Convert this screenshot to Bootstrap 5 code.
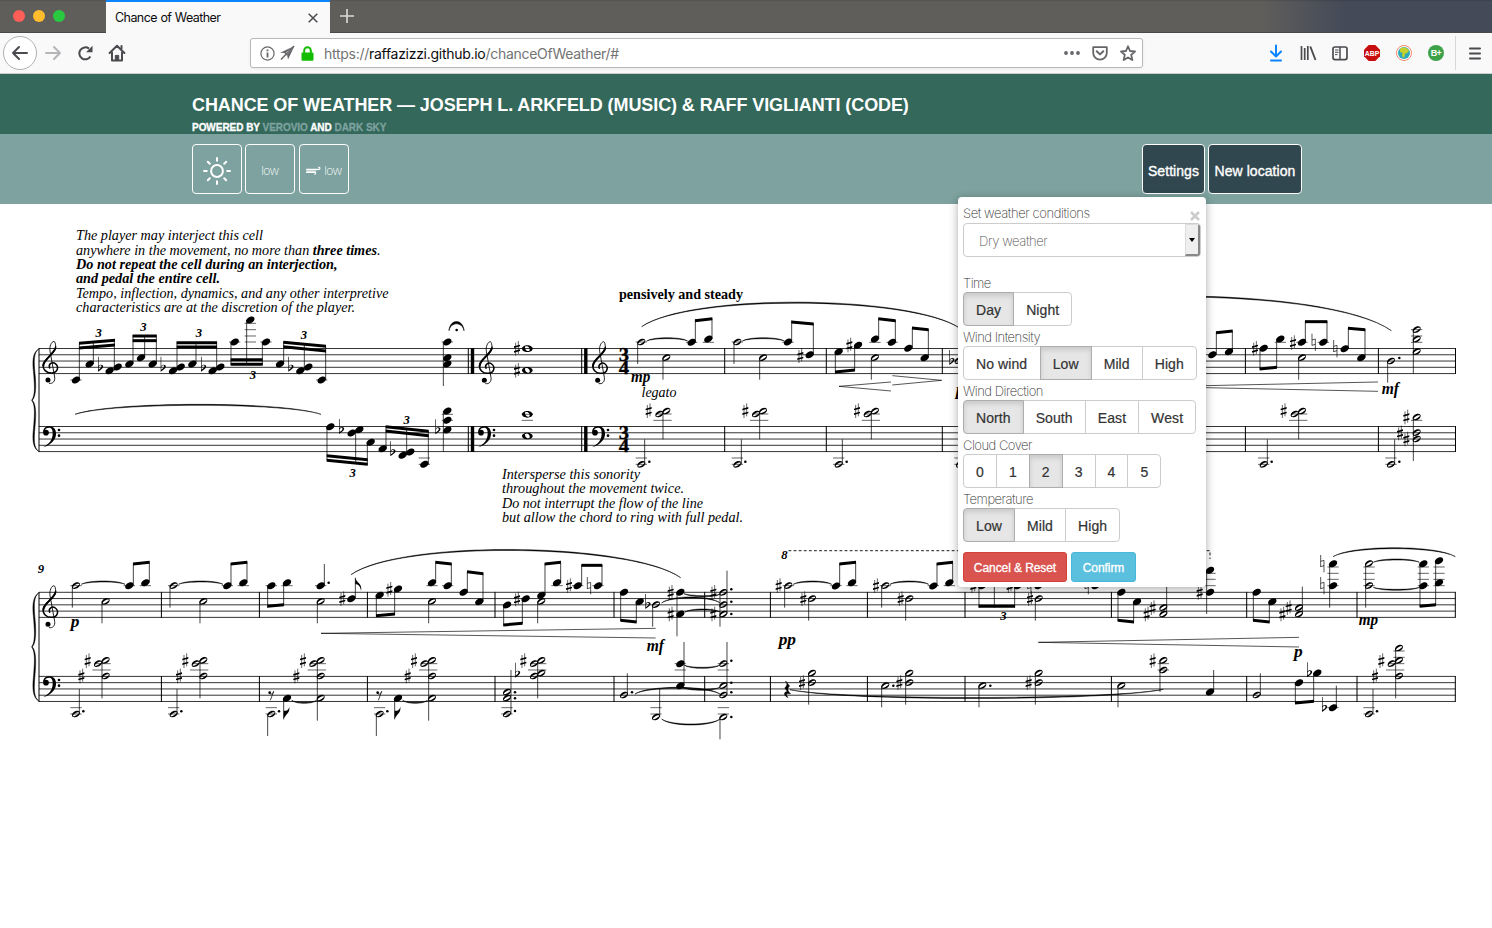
<!DOCTYPE html>
<html lang="en">
<head>
<meta charset="utf-8">
<title>Chance of Weather</title>
<meta name="viewport" content="width=device-width, initial-scale=1">
<link rel="stylesheet" href="https://cdn.jsdelivr.net/npm/bootstrap@5.3.0/dist/css/bootstrap.min.css">
<style>
body{font-family:"Liberation Sans",Arial,sans-serif;font-size:14px;line-height:20px;color:#333;background:#fff;overflow:hidden}
svg{display:block;flex:none}
.tabstrip{height:33px;background:linear-gradient(#0002,#0000 2px),linear-gradient(90deg,#605e5b 0,#605e5b 1260px,#444a58 1345px);border-bottom:1px solid #4a4948}
.lights{width:106px;padding-left:13px;gap:8px}
.lights i{width:12px;height:12px;border-radius:50%;background:#ff5f57}
.lights i:nth-child(2){background:#ffbd2e}
.lights i:nth-child(3){background:#28c940}
.page-tab{width:224px;height:33px;background:#f9f9fa;border-top:2px solid #0a84ff;font:12px/30px Inter,sans-serif;letter-spacing:-.55px;word-spacing:.5px;color:#0c0c0d;padding:0 12px 0 9px}
.page-tab span{letter-spacing:-.52px}
.toolbar{height:41px;background:#f9f9fa;border-bottom:1px solid #ccc;color:#4a4a4f}
.back{width:34px;height:34px;border:1px solid #b1b1b1;border-radius:50%;background:#fff;margin-left:3px}
.urlbar{width:893px;height:30px;border:1px solid #b9b9ba;border-radius:3px;background:#fff;padding:0 6px 0 9px;font:14px Inter,sans-serif;box-shadow:0 1px 3px #0001}
.url{color:#737373;letter-spacing:-.28px;margin-left:10px;padding-top:1px}
.url b{font-weight:400;color:#0c0c0d}
.masthead{height:60px;background:#33685b;padding-left:192px;color:#fff}
.masthead h1{font-size:18px;line-height:20px;font-weight:700;letter-spacing:-.09px;margin:0;padding-top:21px;white-space:nowrap}
.masthead p{font-size:10px;line-height:12px;font-weight:700;letter-spacing:-.04px;margin:7px 0 0;-webkit-text-stroke:.3px;white-space:nowrap}
.masthead a{color:#7da29f;text-decoration:none}
.condbar{height:70px;background:#7da29f;padding:10px 190px 0 192px}
.tile{width:50px;height:50px;border:1px solid #fff;border-radius:4px;color:#fff;font:200 12px Inter,sans-serif;letter-spacing:-.6px;padding:3px 0 0}
.btn-dusk{height:50px;border:1px solid #fff;border-radius:4px;background:#31474f;color:#fff;font-size:14px;letter-spacing:.06px;padding:4px 0 0;-webkit-text-stroke:.35px}
.settings-pop{position:absolute;right:96px;top:53px;width:248px;height:390px;z-index:5;background:#fff;border:0;border-radius:4px;box-shadow:0 2px 10px #0005;padding:6px 5px 5px}
.thin{font-family:Inter,sans-serif;font-weight:200;font-size:13px;line-height:20px;letter-spacing:-.4px;color:#333}
.settings-pop>.thin:not(.pick){height:20px;line-height:22px;letter-spacing:-.5px}
.pick{height:34px;width:238px;border:1px solid #ccc;border-radius:4px;padding-left:15px;margin-bottom:15px;overflow:hidden;color:#555}
.pick>span:first-child{padding-top:1px}
.arrow{width:15px;height:32px;background:#efefef;border:1px solid #ddd;border-right:2px solid #888;border-bottom:2px solid #888}
.settings-pop .btn-group .btn{height:34px;font-size:14px;line-height:20px;letter-spacing:.09px;padding:7px 12px 5px;border:1px solid #ccc;color:#333;background:#fff;border-radius:4px;-webkit-text-stroke:.2px}
.settings-pop .btn-group .btn+.btn{border-top-left-radius:0;border-bottom-left-radius:0}
.settings-pop .btn-group .btn:not(:last-child){border-top-right-radius:0;border-bottom-right-radius:0}
.settings-pop .btn-group .btn.active{background:#e6e6e6;border-color:#adadad;box-shadow:inset 0 3px 5px #00000020}
.act{height:30px;font-size:12px;line-height:18px;letter-spacing:-.08px;padding:6px 0 4px;border-radius:3px;color:#fff;-webkit-text-stroke:.3px}
.act:hover{color:#fff}
.act-red{background:#d9534f;border:1px solid #d43f3a;width:104px}
.act-blue{background:#5bc0de;border:1px solid #46b8da;width:65px}
.score text{font-family:"Liberation Serif",serif;fill:#000}
.score .it{font-style:italic;font-size:14px}
.score .bi{font-style:italic;font-weight:700}
</style>
</head>
<body>
<header>
  <div class="tabstrip d-flex">
    <div class="lights d-flex align-items-center"><i></i><i></i><i></i></div>
    <div class="page-tab d-flex justify-content-between align-items-center">
      <span style="letter-spacing:-.57px;font-size:12.500px">Chance of Weather</span>
      <svg width="10" height="10" viewBox="0 0 10 10" stroke="#4a4a4f" stroke-width="1.5"><path d="M.7.7l8.6 8.6M9.3.7L.7 9.3"/></svg>
    </div>
    <svg class="ms-2 mt-2" width="18" height="16" viewBox="0 0 18 16" stroke="#ddd" stroke-width="1.6"><path d="M2 8h14M9 1v14"/></svg>
  </div>
  <div class="toolbar d-flex align-items-center">
    <span class="back d-flex align-items-center justify-content-center">
      <svg width="18" height="16" viewBox="0 0 18 16" fill="none" stroke="#4a4a4f" stroke-width="2" stroke-linecap="round" stroke-linejoin="round"><path d="M16 8H2M8 2L2 8l6 6"/></svg>
    </span>
    <svg style="margin-left:8px" width="17" height="16" viewBox="0 0 17 16" fill="none" stroke="#b5b5b7" stroke-width="2" stroke-linecap="round" stroke-linejoin="round"><path d="M1 8h14M9 2l6 6-6 6"/></svg>
    <svg style="margin-left:15px" width="17" height="16" viewBox="0 0 17 16" fill="none" stroke="#4a4a4f" stroke-width="2"><path d="M13.4 11.5A6 6 0 1 1 12 3.6"/><path d="M15.5.8v6.4H9.1z" fill="#4a4a4f" stroke="none"/></svg>
    <svg style="margin-left:14px" width="18" height="18" viewBox="0 0 18 18" fill="none" stroke="#4a4a4f" stroke-width="2" stroke-linejoin="round" stroke-linecap="round"><path d="M1.6 9L9 1.7 16.4 9M4 8.5v8h10v-8"/><path d="M7.3 16v-4.600h3.400V16" fill="#4a4a4f" stroke-width="1"/><path d="M13.500 2v2.500"/></svg>
    <div class="urlbar d-flex align-items-center" style="margin-left:124px">
      <svg width="15" height="15" viewBox="0 0 15 15" fill="none" stroke="#66666a" stroke-width="1.2"><circle cx="7.5" cy="7.5" r="6.6"/><path d="M7.5 6.4v5M7.5 3.5v1.7" stroke-width="1.8"/></svg>
      <svg class="ms-1" width="16" height="16" viewBox="0 0 16 16" fill="#66666a"><path d="M15.5 1L1 7.8l5.4.3zM15.5 1L9 14.500 8 9.500z"/><path d="M2 14.500L15 1M5.5 7l2.600 3" stroke="#66666a" stroke-width="1.500"/></svg>
      <svg style="margin-left:6px" width="13" height="15" viewBox="0 0 13 15"><rect x=".5" y="6.500" width="12" height="8.200" rx="1" fill="#12bc00"/><path d="M3.200 7V4.500a3.300 3.300 0 0 1 6.600 0V7" fill="none" stroke="#12bc00" stroke-width="2"/></svg>
      <span class="url">https://<b>raffazizzi.github.io</b>/chanceOfWeather/#</span>
      <div class="d-flex align-items-center ms-auto gap-2">
        <svg style="margin-right:4px" width="16" height="4" viewBox="0 0 16 4" fill="#66666a"><circle cx="2" cy="2" r="1.900"/><circle cx="8" cy="2" r="1.900"/><circle cx="14" cy="2" r="1.900"/></svg>
        <svg width="16" height="15" viewBox="0 0 16 15" fill="none" stroke="#66666a" stroke-width="1.800" stroke-linecap="round" stroke-linejoin="round"><path d="M1.200 1.200h13.600v5.600a6.800 6.800 0 0 1-13.600 0z"/><path d="M4.700 5.200L8 8.400l3.300-3.200" stroke-width="2"/></svg>
        <svg class="ms-1" width="16" height="17" viewBox="0 0 16 17" fill="none" stroke="#66666a" stroke-width="1.800" stroke-linejoin="round"><path d="M8 1.300l2 4.700 5 .5-3.800 3.400 1.100 5.100L8 12.400 3.700 15l1.100-5.100L1 6.500 6 6z"/></svg>
      </div>
    </div>
    <div class="d-flex align-items-center" style="margin-left:125px;gap:16px">
      <svg width="16" height="18" viewBox="0 0 16 18" fill="none" stroke="#0a84ff" stroke-width="2" stroke-linecap="round" stroke-linejoin="round"><path d="M8 1.500v10M3 7.500l5 5 5-5M3 16.500h10"/></svg>
      <svg width="17" height="16" viewBox="0 0 17 16" stroke="#4a4a4f" stroke-width="1.700"><path d="M1.500 1v14M4.700 3v12M7.800 1v14" /><path d="M10.300 1.500L15.500 15" stroke-width="1.900"/></svg>
      <svg style="margin-left:-1px" width="16" height="15" viewBox="0 0 16 15" fill="none" stroke="#4a4a4f"><rect x="1" y="1" width="14" height="12.600" rx="2" stroke-width="1.700"/><path d="M8 1v12" stroke-width="1.500"/><path d="M3 4h3.500M3 6.300h3.500M3 8.600h2.500" stroke-width="1"/></svg>
      <svg width="16" height="16" viewBox="0 0 16 16"><path d="M4.700 0h6.600L16 4.700v6.600L11.300 16H4.700L0 11.300V4.700z" fill="#c70d0d"/><text x="8" y="10.900" text-anchor="middle" font-family="Liberation Sans" font-weight="700" font-size="8" textLength="14.500" lengthAdjust="spacingAndGlyphs" fill="#fff">ABP</text></svg>
      <svg width="16" height="16" viewBox="0 0 16 16"><circle cx="8" cy="8" r="7.500" fill="#fff" stroke="#f5886a"/><circle cx="8" cy="8" r="6" fill="#2fa9b8"/><path d="M4 4c3-3 8-1 9 2l-2 2-2 1-1 4-2-2 .5-3L4 7z" fill="#c5d12a"/></svg>
      <svg width="16" height="16" viewBox="0 0 16 16"><circle cx="8" cy="8" r="8" fill="#3da249"/><text x="8.300" y="11.100" text-anchor="middle" font-family="Liberation Sans" font-weight="700" font-size="9" textLength="11" fill="#fff">B+</text></svg>
    </div>
    <div class="d-flex align-items-center" style="margin-left:11px;padding-left:13px;height:34px;border-left:1px solid #d7d7db">
      <svg width="12" height="13" viewBox="0 0 12 13" stroke="#4a4a4f" stroke-width="2" stroke-linecap="round"><path d="M1 1.500h10M1 6.500h10M1 11.500h10"/></svg>
    </div>
  </div>
</header>
<div class="masthead">
  <h1>CHANCE OF WEATHER — JOSEPH L. ARKFELD (MUSIC) &amp; RAFF VIGLIANTI (CODE)</h1>
  <p>POWERED BY <a href="#">VEROVIO</a> AND <a href="#">DARK SKY</a></p>
</div>
<div class="condbar d-flex justify-content-between">
  <div class="d-flex" style="gap:3px">
    <span class="tile d-flex align-items-center justify-content-center">
      <svg width="28" height="28" viewBox="0 0 28 28" fill="none" stroke="#fff" stroke-width="2" stroke-linecap="round"><circle cx="14" cy="14" r="5.900"/><path d="M14 1v2.800M14 24.200V27M1 14h2.800M24.200 14H27M4.800 4.800l2 2M21.200 21.200l2 2M4.800 23.200l2-2M21.200 6.800l2-2"/></svg>
    </span>
    <span class="tile d-flex align-items-center justify-content-center">low</span>
    <span class="tile d-flex align-items-center justify-content-center" style="margin-left:1px">
      <svg style="margin-right:3px" width="15" height="9" viewBox="0 0 15 9" fill="none" stroke="#fff" stroke-width="1.100" stroke-linecap="round"><path d="M.6 3.400H12.700c1.700 0 1.700-2.400-.2-2.200M.6 5H10M.6 6.400H8.700c1.300 0 1.200 1.900 0 1.700"/></svg>low</span>
  </div>
  <div class="position-relative d-flex" style="gap:3px">
    <button class="btn btn-dusk" style="width:63px">Settings</button>
    <button class="btn btn-dusk" style="width:94px">New location</button>
    <div class="settings-pop card">
      <div class="d-flex justify-content-between"><label class="thin">Set weather conditions</label>
        <svg style="margin:8px 1px 0 0" width="10" height="10" viewBox="0 0 10 10" stroke="#ccc" stroke-width="2.600"><path d="M1 1l8 8M9 1L1 9"/></svg></div>
      <div class="pick thin d-flex align-items-center justify-content-between"><span>Dry weather</span>
        <span class="arrow d-flex align-items-center justify-content-center"><svg width="6" height="4" viewBox="0 0 6 4"><path d="M0 0h6L3 4z"/></svg></span></div>
      <label class="thin">Time</label>
      <div><div class="btn-group d-inline-flex align-top"><button class="btn active">Day</button><button class="btn">Night</button></div></div>
      <label class="thin">Wind Intensity</label>
      <div><div class="btn-group d-inline-flex align-top"><button class="btn" style="padding-right:12.500px">No wind</button><button class="btn active">Low</button><button class="btn">Mild</button><button class="btn">High</button></div></div>
      <label class="thin">Wind Direction</label>
      <div><div class="btn-group d-inline-flex align-top"><button class="btn active">North</button><button class="btn">South</button><button class="btn">East</button><button class="btn">West</button></div></div>
      <label class="thin">Cloud Cover</label>
      <div><div class="btn-group d-inline-flex align-top"><button class="btn">0</button><button class="btn">1</button><button class="btn active">2</button><button class="btn">3</button><button class="btn">4</button><button class="btn">5</button></div></div>
      <label class="thin">Temperature</label>
      <div><div class="btn-group d-inline-flex align-top"><button class="btn active">Low</button><button class="btn">Mild</button><button class="btn">High</button></div></div>
      <div class="d-flex gap-1" style="margin-top:10px"><button class="btn act act-red">Cancel &amp; Reset</button><button class="btn act act-blue">Confirm</button></div>
    </div>
  </div>
</div>
<main>
<svg class="score" width="1492" height="724" viewBox="0 204 1492 724">
  <defs>
    <!-- glyphs are drawn at three units per pixel, origin on the note's own line -->
    <path id="gq" d="M-12.500 3C-12.500-5-2-10.500 5-10.500C10-10.500 12.500-7 12.500-3C12.500 5 2 10.500-5 10.500C-10 10.500-12.500 7-12.500 3z"/>
    <path id="gh" fill-rule="evenodd" d="M-12 4C-12-4-3-10 5-10C10-10 12-7 12-4C12 4 3 10-5 10C-10 10-12 7-12 4zM-9 6C-7 9 9 0 10-4C9-9-10 0-9 6z"/>
    <path id="gw" fill-rule="evenodd" d="M-16 0C-16-6-8-10 0-10S16-6 16 0 8 10 0 10-16 6-16 0zM-7-3C-6 4-1 8 4 7C8 6 8 2 6-2C4-6-1-8-4-7C-7-6-8-5-7-3z"/>
    <path id="gs" d="M-4-17V22M4-22V17" fill="none" stroke="#000" stroke-width="1.800"/>
    <path id="gsb" d="M-9-6L9-11V-6L-9-1zM-9 8L9 3V8L-9 13z"/>
    <path id="gf" fill-rule="evenodd" d="M-7-32H-5.200V-4C-1-10 9-9 8.500-2C8 4 0 7-7 13zM-5.200-1V7C0 3 3.500 1 3.500-3C3.500-8-3-6-5.200-1z"/>
    <path id="gn" d="M-5-26V10M5-10V26M-5-7L5-10M-5 9L5 6" fill="none" stroke="#000" stroke-width="2"/>
    <g id="treble" fill="none" stroke="#000" stroke-linecap="round">
      <path d="M-4 3C-9-9 4-17 13-10C25-1 20 17 3 18C-14 19-26 7-23-9C-19-26 12-40 14-60" stroke-width="4.500"/>
      <path d="M14-60C14-70 12-76 9-77C1-76-5-62-3-48L11 30C13 43 5 51-5 49" stroke-width="2.600"/>
      <path d="M-23-4C-21-24 8-38 13-56" stroke-width="5.500"/>
      <circle cx="-9" cy="39" r="7.500" fill="#000" stroke="none"/>
    </g>
    <g id="bass"><circle cx="-12" cy="0" r="8.500"/><path d="M-20-1C-22-14-10-20 0-19C14-18 19-6 18 6C16 24 0 38-21 44C-2 34 7 22 8 5C9-8 5-15-2-15C-10-15-15-11-15-7z"/><circle cx="27" cy="-8" r="4"/><circle cx="27" cy="9" r="4"/></g>
    <path id="brace" d="M23 1C6 12 8 40 11 75C15 115 14 145 3 156C14 167 15 197 11 237C8 272 6 300 23 311C3 300 3 272 7 237C10 197 12 170 1 156C12 142 10 115 7 75C3 40 3 12 23 1z" stroke="#000" stroke-width="1.500"/>
    <path id="flagd" d="M0 0C3-14 20-18 17-38C14-24 4-26 0-26z"/>
    <path id="rest8" d="M-7-5C-3 0 4-3 6-11L-4 16M6-11" fill="none" stroke="#000" stroke-width="2.200"/>
  </defs>
  <g id="staves"></g>
  <g id="notes"></g>
  <g class="it">
    <text x="76" y="240.200" textLength="187" lengthAdjust="spacingAndGlyphs">The player may interject this cell</text>
    <text x="76" y="255" textLength="304.500" lengthAdjust="spacingAndGlyphs">anywhere in the movement, no more than <tspan font-weight="700">three times</tspan>.</text>
    <text x="76" y="269" textLength="261.500" lengthAdjust="spacingAndGlyphs" font-weight="700">Do not repeat the cell during an interjection,</text>
    <text x="76" y="283.200" textLength="144" lengthAdjust="spacingAndGlyphs" font-weight="700">and pedal the entire cell.</text>
    <text x="76" y="298" textLength="312.500" lengthAdjust="spacingAndGlyphs">Tempo, inflection, dynamics, and any other interpretive</text>
    <text x="76" y="312" textLength="279" lengthAdjust="spacingAndGlyphs">characteristics are at the discretion of the player.</text>
    <text x="502" y="479" textLength="138" lengthAdjust="spacingAndGlyphs">Intersperse this sonority</text>
    <text x="502" y="493.200" textLength="182" lengthAdjust="spacingAndGlyphs">throughout the movement twice.</text>
    <text x="502" y="508" textLength="201" lengthAdjust="spacingAndGlyphs">Do not interrupt the flow of the line</text>
    <text x="502" y="522" textLength="241" lengthAdjust="spacingAndGlyphs">but allow the chord to ring with full pedal.</text>
    <text x="641.500" y="397" textLength="35" lengthAdjust="spacingAndGlyphs">legato</text>
  </g>
  <text x="619" y="299" textLength="124" lengthAdjust="spacingAndGlyphs" font-size="14" font-weight="700">pensively and steady</text>
</svg>
</main>
<script src="https://cdn.jsdelivr.net/npm/bootstrap@5.3.0/dist/js/bootstrap.bundle.min.js"></script>
<script>
const use=(id,x,y)=>`<use href="#${id}" x="${x}" y="${y}"/>`;
const line=(a,b,c,d,w)=>`<path d="M${a} ${b}L${c} ${d}" stroke="#000" stroke-width="${w}"/>`;
// tapered curve: end points and the height of the bow (negative bows upwards)
function slur(x1,y1,x2,y2,h,k=.15){
  const w=x2-x1,c=h*4/3,t=h<0?4:-4;
  return `<path stroke="#000" stroke-width="1.500" d="M${x1} ${y1}C${x1+w*k} ${y1+c} ${x2-w*k} ${y2+c} ${x2} ${y2}C${x2-w*k} ${y2+c+t} ${x1+w*k} ${y1+c+t} ${x1} ${y1}z"/>`;
}
const draw={
  q:(x,y)=>use('gq',x,y), h:(x,y)=>use('gh',x,y), w:(x,y)=>use('gw',x,y),
  '#':(x,y)=>use('gs',x,y)+use('gsb',x,y), f:(x,y)=>use('gf',x,y), n:(x,y)=>use('gn',x,y),
  s:(x,a,b)=>line(x,a,x,b,2.2),
  b:(x1,y1,x2,y2)=>`<path d="M${x1-1} ${y1-4.500}L${x2+1} ${y2-4.500}V${y2+4.500}L${x1-1} ${y1+4.500}z"/>`,
  l:(x,...ys)=>ys.map(y=>line(x-17,y,x+17,y,1.8)).join(''),
  L:(x,...ys)=>ys.map((y,i)=>line(x-(i?29:22),y,x+26,y,1.8)).join(''),
  d:(x,y)=>`<circle cx="${x}" cy="${y}" r="3.800"/>`,
  u:slur, i:(a,b,c,d)=>line(a,b,c,d,2),
  t:(x,y,s)=>`<text class="bi" x="${x}" y="${y}" font-size="38" text-anchor="middle">${s}</text>`,
  D:(x,y,s)=>`<text class="bi" x="${x}" y="${y}" font-size="50" text-anchor="middle" textLength="${{mp:58,mf:52,pp:52,p:26}[s]}" lengthAdjust="spacingAndGlyphs">${s}</text>`,
  N:(x,y,s)=>`<text x="${x-15.500}" y="${y}" font-size="56" font-weight="700" textLength="31" lengthAdjust="spacingAndGlyphs" stroke="#000">${s}</text>`,
  T:(x,y)=>use('treble',x,y), B:(x,y)=>use('bass',x,y), F:(x,y)=>use('flagd',x,y), r:(x,y)=>`<circle cx="${x-6}" cy="${y-7}" r="4"/>`+use('rest8',x,y)
};
const parts=[
[20,220,`T 93 441;B 90 638;q 168 480;l 168 480;q 209 432;f 241 442;q 269 452;q 293 441;s 178 368 480;s 220 365 432;s 283 360 452;b 178 370 284 361;b 178 384 284 375;t 236 352 3
q 328 432;q 363 413;q 398 432;s 339 345 432;s 374 345 413;s 409 345 432;b 339 348 409 348;b 339 362 409 362;t 370 333 3
f 429 442;q 459 452;q 482 441;q 517 432;f 550 442;q 578 452;q 601 441;s 471 365 452;s 528 365 432;s 590 365 452;b 471 368 590 368;b 471 381 590 381;t 537 352 3
q 644 366;q 691 300;q 738 366;s 633 366 435;s 680 300 435;s 727 366 435;l 644 366;l 738 366;l 691 310 329 348 366;b 633 419 727 419;b 633 433 727 433;t 699 476 3
q 780 432;f 812 442;q 841 452;q 865 441;q 905 480;l 905 480;s 791 365 432;s 853 370 452;s 917 378 480;b 791 367 917 379;b 791 380 917 393;t 852 358 3
u 165 583 903 583 -30;q 931 620;f 964 629;q 995 639;q 1018 629;q 1052 667;s 921 620 722;s 1007 630 728;s 1042 667 735;b 921 707 1042 719;b 921 721 1042 733;t 998 770 3;q 1088 686`],
[380,280,`f 38 516;q 68 526;q 91 516;q 133 553;l 133 534 553;s 18 438 507;s 80 445 524;s 145 452 553;b 18 440 145 454;b 18 453 145 467;t 80 431 3
q 202 186;l 202 186;q 202 233;q 202 252;s 190 186 318;d 230 150
q 202 393;q 202 421;q 202 450;l 202 403 421;f 173 450;s 190 393 515
T 322 262;B 315 458;T 662 262;B 657 458;w 442 206;# 411 205;w 442 271;# 411 271;w 442 403;l 442 403 421;w 442 468
N 732 243 3;N 732 281 4;N 732 477 3;N 732 515 4`],
[620,280,`h 64 186;l 64 186;s 53 186 252;u 80 183 203 183 -10;q 215 187;q 265 177;l 215 187;l 265 187;s 226 118 187;s 276 115 177;b 226 122 276 116;h 139 233;s 129 233 299
h 352 186;l 352 186;s 342 186 252;u 367 183 493 183 -10;q 504 186;l 504 187;# 541 227;q 569 224;s 515 122 186;s 580 130 224;b 515 126 580 132;h 429 233;s 419 233 299
q 656 215;# 688 195;q 714 196;s 646 215 277;s 704 196 272;b 646 276 704 270;q 765 177;q 816 187;l 765 187;l 816 187;s 776 115 177;s 826 120 187;b 776 116 826 122;h 765 233;s 754 233 299;q 865 205;q 914 233;s 877 144 205;s 925 148 233;b 877 144 925 149
f 995 242;h 1016 242;u 65 140 1020 145 -76;i 657 319 813 306;i 657 319 813 333;i 817 287 965 301;i 817 315 965 301;D 62 305 mp;D 1020 345 p
# 86 392;h 118 402;h 139 393;L 129 402 421;s 129 393 478;h 64 553;l 64 534 553;d 88 545;s 74 478 553
# 376 392;h 408 402;h 429 393;L 419 402 421;s 419 393 478;h 352 553;l 352 534 553;d 376 545;s 364 478 553
# 711 392;h 743 402;h 765 393;L 754 402 421;s 754 393 478;h 656 553;l 656 534 553;d 680 545;s 667 478 553;h 1020 553;l 1020 534 553`],
[1190,280,`q 67 224;q 117 215;s 79 155 224;s 127 152 215;b 79 158 127 153;# 195 205;q 221 205;q 271 177;l 271 187;s 210 205 268;s 260 177 264;b 210 267 260 262;# 309 188;q 336 187;l 336 187;n 371 187;q 400 187;l 400 187;s 346 124 187;s 411 124 187;b 346 125 411 125;h 336 233;s 326 233 299;n 436 206;q 464 206;q 514 233;s 475 144 206;s 525 148 233;b 475 145 525 149
u -680 152 604 152 -104;i 0 318 564 306;i 0 322 564 334;h 603 243;d 628 234;s 593 243 308;h 680 149;h 680 177;h 680 215;l 680 149 168 187;s 670 149 281;D 601 343 mf
# 281 392;h 314 402;h 336 393;L 326 402 421;s 326 393 478;h 221 553;l 221 534 553;d 245 545;s 232 478 553
# 649 411;h 680 411;l 680 421;# 630 459;h 680 458;# 649 477;h 680 477;s 670 411 543;h 603 553;l 603 534 553;d 628 545;s 614 478 553`],
[20,540,`T 93 214;B 90 428;t 63 98 9;h 168 137;l 168 137;s 157 137 203;u 184 133 315 133 -10;q 328 137;q 376 128;l 328 137;l 376 137;s 340 70 137;s 388 67 128;b 340 72 388 67;h 257 184;s 246 184 250
h 461 137;l 461 137;s 450 137 203;u 476 133 609 133 -10;q 622 137;q 670 128;l 622 137;l 670 137;s 633 70 137;s 681 67 128;b 633 72 681 67;h 550 184;s 540 184 250
q 754 137;q 801 128;l 754 137;l 801 137;s 743 137 203;s 791 128 197;b 743 199 791 194;q 902 137;l 902 137;d 926 128;s 913 72 137;h 902 184;s 892 184 250;# 967 176;q 994 176;s 1006 113 176;D 165 262 p
u 993 104 1982 113 -80;i 903 280 1907 265;i 903 280 1907 294
# 203 362;h 234 371;h 257 361;L 246 371 390;# 184 408;h 257 408;s 246 361 475;h 168 522;l 168 503 522;d 190 514;s 178 447 522
# 496 362;h 527 371;h 550 361;L 539 371 390;# 477 408;h 550 408;s 540 361 475;h 461 522;l 461 503 522;d 484 514;s 471 447 522
# 849 362;h 880 371;h 902 361;L 892 371 390;# 829 408;h 902 408;h 902 474;s 892 361 542;r 755 465;q 801 475;s 791 475 538;F 791 538;u 815 481 890 481 9;h 754 522;l 754 503 522;d 777 514;s 743 522 588`],
[360,540,`q 59 166;# 88 148;q 114 147;s 49 166 230;s 104 147 224;b 49 227 104 222;q 216 128;q 263 137;l 216 137;l 263 137;s 227 67 128;s 274 70 137;b 227 67 274 72;h 216 184;s 206 184 250;q 311 157;q 358 185;s 322 95 157;s 369 98 185;b 322 95 369 101
q 441 195;# 471 177;q 497 176;s 431 195 257;s 487 176 250;b 431 255 487 250;q 544 166;q 591 128;l 591 137;s 555 70 166;s 602 67 128;b 555 72 602 67;h 544 184;s 533 184 250;# 627 137;q 653 137;l 653 137;n 687 137;q 714 137;l 714 137;s 665 75 137;s 726 75 137;b 665 76 726 76
q 792 157;q 839 185;s 782 157 243;s 829 185 246;b 782 241 829 246;f 863 194;h 888 194;s 878 194 260;# 932 157;q 961 157;# 932 222;q 961 222;s 951 157 289;u 972 161 1080 163 8;u 905 189 1080 189 -18;u 975 216 1080 216 -9
# 1060 157;h 1090 157;d 1114 148;h 1090 194;d 1114 185;# 1060 222;h 1090 222;d 1114 222;s 1101 92 222;s 1080 157 260;D 886 332 mf
r 59 465;q 114 475;s 104 475 538;F 104 538;u 128 481 203 481 9;h 59 522;l 59 503 522;d 82 514;s 49 522 588;# 162 362;h 193 371;h 216 361;L 206 371 390;# 143 408;h 216 408;h 216 474;s 206 361 542
h 441 456;h 441 474;h 441 522;l 441 503 522;d 465 457;d 465 475;d 465 513;s 453 390 522;# 490 362;h 522 371;h 544 361;L 533 371 390;f 472 400;h 522 408;h 544 399;s 533 361 475
h 792 465;d 816 457;s 802 400 465;u 825 462 1080 462 -20;q 961 371;l 961 371 390;q 961 437;s 972 306 437;u 972 375 1080 375 10;u 968 442 1080 442 9;h 888 531;l 888 503 522;s 899 447 531;u 905 537 1080 537 18
h 1090 371;l 1090 371 390;d 1114 362;h 1090 437;d 1114 428;h 1090 465;d 1114 457;h 1090 531;l 1090 503 522;d 1114 531;s 1101 306 465;s 1080 531 598`],
[740,540,`t 133 57 8;# 116 137;h 145 137;l 145 137;s 134 137 203;u 160 133 275 133 -10;q 288 138;q 336 128;l 288 137;l 336 137;s 299 70 137;s 347 67 128;b 299 72 347 67;# 190 176;h 216 176;s 206 176 242
# 408 137;h 436 137;l 436 137;s 425 137 203;u 450 133 566 133 -10;q 580 138;q 628 128;l 580 137;l 628 137;s 591 70 137;s 638 67 128;b 591 72 638 67;# 482 176;h 508 176;s 497 176 242
# 700 137;q 727 137;q 834 137;# 809 137;s 717 138 203;s 763 120 203;s 824 138 203;b 717 199 824 199;t 790 241 3;n 868 137;q 896 137;h 896 176;# 870 176;s 886 176 242;n 1040 137;q 1067 137;D 142 314 pp
i 895 307 1677 292;i 895 307 1677 321;# 186 428;h 216 428;h 216 399;s 206 399 494;u 150 449 1270 448 27
h 436 437;d 460 437;s 425 437 502;# 478 428;h 508 428;h 508 399;s 497 399 494;h 727 437;d 751 437;s 717 437 502;# 866 428;h 896 428;h 896 399;s 886 399 494`],
[1100,540,`q 64 157;q 111 185;s 54 157 243;s 101 185 246;b 54 241 101 246;# 158 203;# 140 222;h 190 203;h 190 222;s 200 140 222;q 330 91;q 330 157;# 299 157;s 320 91 222;l 330 100 118 137
q 470 157;q 517 185;s 460 157 243;s 508 185 246;b 460 241 508 246;# 566 203;# 547 222;h 597 203;h 597 222;s 607 140 222;n 667 71;n 667 137;q 699 71;q 699 137;l 699 81 100 118 137;s 689 71 203
u 699 50 1066 50 -27;h 807 71;h 807 137;l 807 81 100 118 137;s 797 71 203;u 820 67 958 67 -10;u 820 142 958 142 9;q 970 71;q 970 137;q 1017 62;q 1017 128;s 960 71 200;s 1007 62 197;l 970 81 100 118 137;l 1017 81 100 118 137;b 960 199 1007 194;D 805 255 mp;D 595 351 p
h 64 437;s 54 437 502;# 158 362;h 190 361;h 190 390;l 190 371 390;s 180 361 456;q 330 456;s 341 390 456;h 470 465;s 481 400 465;q 597 428;f 628 399;q 652 399;s 586 428 490;s 641 399 486;b 586 489 641 484;f 673 503;q 699 503;l 699 503;s 709 437 503
# 844 362;h 875 371;h 897 361;h 897 324;l 897 333 352;L 887 371 390;# 825 408;h 897 408;s 887 324 475;h 807 522;l 807 503 522;d 831 514;s 819 447 522`]
];
document.getElementById('notes').innerHTML=parts.map(([ox,oy,src])=>`<g transform="translate(${ox} ${oy}) scale(.33333)">`+
  src.split(/[;\n]/).map(c=>{const [k,...a]=c.trim().split(' ');
    return draw[k](...a.map((v,i)=>('tDN'.includes(k)&&i==2)?v:+v))}).join('')+'</g>').join('')
  // fermata, quarter rest, up-flag and the octave bracket
  +'<path d="M449 330.700C450 318.500 463 318.500 464 330.700C462.500 321.500 450.500 321.500 449 330.700z" stroke="#000" stroke-width=".6"/>'
  +'<path d="M785.500 681L789.500 686C786.500 689 788 691 790.500 694C786 692.500 785.500 695 788 697.500C783 695.500 784 691.500 787.500 691.500L784.800 688C788 685 787 683 785.500 681z" stroke="#000" stroke-width=".6"/>'
  +'<path d="M355.300 577.500C355.600 582 363 584 361 591C360.500 586 358 584.500 355.300 584z"/>'
  +'<path d="M788.500 550.700H1210V559" fill="none" stroke="#000" stroke-width=".9" stroke-dasharray="2.800 2.300"/>';
let s='';
const staff=y=>{for(let i=0;i<5;i++)s+=line(39,y+i*6.27,1455.5,y+i*6.27,.8)};
[348.5,426.5,592.3,676.4].forEach(staff);
const bars=(tops,xs,w)=>tops.forEach(y=>xs.forEach(x=>s+=line(x,y-.4,x,y+25.5,w)));
bars([348.5,426.5],[468.3,581.7,724.7,826.3,942.3,1245.4,1378.4,1455.5],1);
bars([348.5,426.5],[472.5,585.8],3.4);
bars([592.3,676.4],[161.4,259.4,367.4,495,614,704.7,770.4,867.4,965,1111.4,1246.7,1357,1455.3],1);
s+=line(39,348,39,452,1)+line(39,592,39,702,1);
s+='<g transform="translate(31.300 348.500) scale(.3333 .3315)"><use href="#brace"/></g><g transform="translate(31.300 592.300) scale(.3333 .3500)"><use href="#brace"/></g>';
document.getElementById('staves').innerHTML=s;
</script>
</body>
</html>
